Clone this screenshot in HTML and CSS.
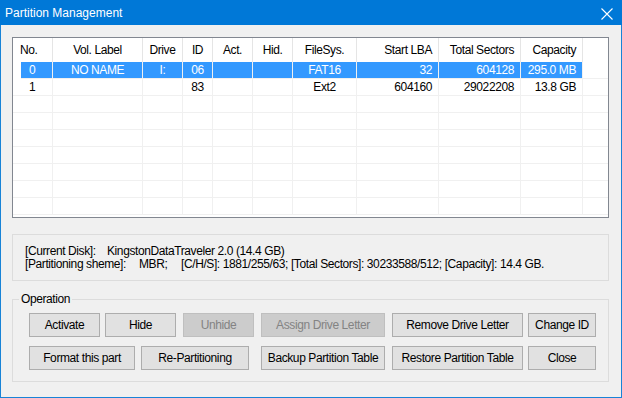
FILE: index.html
```html
<!DOCTYPE html>
<html lang="en">
<head>
    <meta charset="UTF-8">
    <title>Partition Management</title>
    <link rel="stylesheet" href="styles.css">
</head>
<body>
    <div class="window">
        <!-- Title bar -->
        <div class="titlebar">
            <span class="title">Partition Management</span>
            <svg class="close" width="12" height="12" viewBox="0 0 12 12">
                <path d="M0.5 0.5 L11.5 11.5 M11.5 0.5 L0.5 11.5" stroke="#ffffff" stroke-width="1.1" fill="none"/>
            </svg>
        </div>

        <div class="content">
            <!-- Partition list -->
            <div class="listbox">
                <div class="grid">
                    <div class="hd first">No.</div>
                    <div class="hd">Vol. Label</div>
                    <div class="hd">Drive</div>
                    <div class="hd">ID</div>
                    <div class="hd">Act.</div>
                    <div class="hd">Hid.</div>
                    <div class="hd">FileSys.</div>
                    <div class="hd num">Start LBA</div>
                    <div class="hd num">Total Sectors</div>
                    <div class="hd num">Capacity</div>
                    <div class="hd fill"></div>

                    <div class="cell first sel sel-first">0</div>
                    <div class="cell sel">NO NAME</div>
                    <div class="cell sel">I:</div>
                    <div class="cell sel">06</div>
                    <div class="cell sel"></div>
                    <div class="cell sel"></div>
                    <div class="cell sel">FAT16</div>
                    <div class="cell num sel">32</div>
                    <div class="cell num sel">604128</div>
                    <div class="cell num sel">295.0 MB</div>
                    <div class="cell fill"></div>

                    <div class="cell first">1</div>
                    <div class="cell"></div>
                    <div class="cell"></div>
                    <div class="cell">83</div>
                    <div class="cell"></div>
                    <div class="cell"></div>
                    <div class="cell">Ext2</div>
                    <div class="cell num">604160</div>
                    <div class="cell num">29022208</div>
                    <div class="cell num">13.8 GB</div>
                    <div class="cell fill"></div>
                </div>
                <div id="emptyRows" class="grid"></div>
            </div>

            <!-- Disk information -->
            <div class="infobox">
                <div><span class="lbl-disk">[Current Disk]:</span>KingstonDataTraveler 2.0 (14.4 GB)</div>
                <div><span class="lbl-scheme">[Partitioning sheme]:</span><span class="mbr">MBR;</span>[C/H/S]: 1881/255/63; [Total Sectors]: 30233588/512; [Capacity]: 14.4 GB.</div>
            </div>

            <!-- Operation buttons -->
            <fieldset class="operation">
                <legend>Operation</legend>
                <div class="btn-row">
                    <button class="btn w71 ml10">Activate</button>
                    <button class="btn w71 ml5">Hide</button>
                    <button class="btn w71 ml7" disabled>Unhide</button>
                    <button class="btn w124 ml7" disabled>Assign Drive Letter</button>
                    <button class="btn w131 ml7">Remove Drive Letter</button>
                    <button class="btn w68 ml5">Change ID</button>
                </div>
                <div class="btn-row">
                    <button class="btn w106 ml10">Format this part</button>
                    <button class="btn w108 ml6">Re-Partitioning</button>
                    <button class="btn w124 ml12">Backup Partition Table</button>
                    <button class="btn w131 ml7">Restore Partition Table</button>
                    <button class="btn w68 ml5">Close</button>
                </div>
            </fieldset>
        </div>
    </div>

    <script>
        // fill the empty list rows with grid lines
        const empty = document.getElementById('emptyRows');
        for (let r = 0; r < 7; r++) {
            for (let c = 0; c < 11; c++) {
                const d = document.createElement('div');
                d.className = c === 10 ? 'cell fill' : 'cell';
                empty.appendChild(d);
            }
        }
    </script>
</body>
</html>
```

FILE: styles.css
```css
* {
    box-sizing: border-box;
}

body {
    margin: 0;
    font-family: "Liberation Sans", Arial, sans-serif;
    font-size: 12px;
    letter-spacing: -0.4px;
    color: #000000;
    background: #f0f0f0;
}

/* Window frame */
.window {
    width: 622px;
    height: 398px;
    border: 1px solid #1883d7;
    border-top: none;
    background: #f0f0f0;
}

.titlebar {
    height: 25px;
    margin: 0 -1px;
    background: #0078d7;
    display: flex;
    align-items: center;
    justify-content: space-between;
    padding: 0 9px 0 5px;
}

.title {
    color: #ffffff;
    font-size: 12px;
    letter-spacing: 0;
    margin-top: 1px;
}

.close {
    margin-top: 2px;
}

.content {
    padding: 12px 12px 0 11px;
}

/* Partition list */
.listbox {
    width: 597px;
    height: 181px;
    border: 1px solid #828790;
    background: #ffffff;
    overflow: hidden;
}

.grid {
    display: grid;
    grid-template-columns: 40px 90px 40px 30px 40px 40px 64px 82px 82px 62px 1fr;
}

.hd {
    height: 24px;
    line-height: 25px;
    text-align: center;
    border-right: 1px solid #e5e5e5;
    white-space: nowrap;
}

.hd.first {
    text-align: left;
    padding-left: 7px;
}

.cell {
    height: 17px;
    line-height: 17px;
    text-align: center;
    border-right: 1px solid #f0f0f0;
    border-bottom: 1px solid #f0f0f0;
    white-space: nowrap;
}

.cell.first {
    text-align: left;
    padding-left: 16px;
}

.num {
    text-align: right;
    padding-right: 6px;
}

.fill {
    border-right: none;
}

.sel {
    background: #3399ff;
    color: #ffffff;
}

.sel-first {
    margin-left: 8px;
    padding-left: 8px !important;
}

/* Disk information */
.infobox {
    width: 597px;
    height: 47px;
    margin-top: 16px;
    border: 1px solid #dcdcdc;
    padding: 10px 11px 0 12px;
    line-height: 13px;
    white-space: nowrap;
}

.lbl-disk {
    display: inline-block;
    width: 82px;
}

.lbl-scheme {
    display: inline-block;
    width: 114px;
}

.mbr {
    display: inline-block;
    width: 42px;
}

/* Operation group */
.operation {
    width: 597px;
    height: 90px;
    margin: 11px 0 0 0;
    border: 1px solid #dcdcdc;
    padding: 0 0 0 6px;
}

.operation legend {
    padding: 0 2px;
    line-height: 15px;
}

.btn-row {
    display: flex;
    margin-top: 6px;
}

.btn-row + .btn-row {
    margin-top: 9px;
}

.btn {
    height: 24px;
    padding: 0;
    font-family: "Liberation Sans", Arial, sans-serif;
    font-size: 12px;
    letter-spacing: -0.4px;
    color: #000000;
    background: #e1e1e1;
    border: 1px solid #adadad;
    white-space: nowrap;
}

.btn:disabled {
    background: #cccccc;
    border-color: #bfbfbf;
    color: #838383;
}

.w68 { width: 68px; }
.w71 { width: 71px; }
.w106 { width: 106px; }
.w108 { width: 108px; }
.w124 { width: 124px; }
.w131 { width: 131px; }

.ml5 { margin-left: 5px; }
.ml6 { margin-left: 6px; }
.ml7 { margin-left: 7px; }
.ml10 { margin-left: 10px; }
.ml12 { margin-left: 12px; }
```
